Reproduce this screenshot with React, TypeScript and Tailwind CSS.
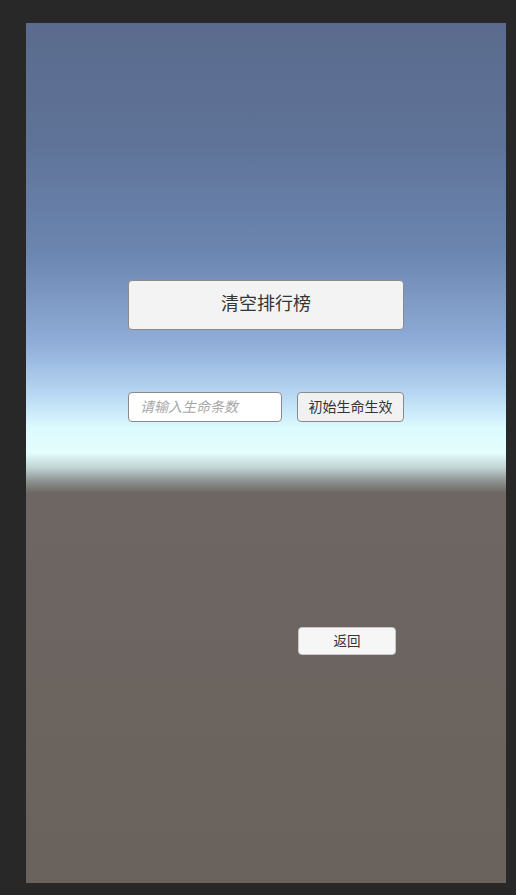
export default function App() {
  return (
    <div className="min-h-[895px] w-[516px] bg-[#282828] pt-[23px] pl-[26px] font-['Noto_Sans_CJK_SC','Noto_Sans',sans-serif]">
      <div className="flex h-[860px] w-[480px] flex-col bg-[linear-gradient(to_bottom,#5a6b8d_0px,#5f7398_120px,#6b86b0_230px,#8fadd8_320px,#b6d6f2_370px,#dcfbff_405px,#e4fdfd_430px,#bfd3d2_445px,#8e9391_458px,#6d6662_470px,#6a625d_860px)] pl-[102px] pt-[257px]">
        <button className="flex h-[50px] w-[276px] items-center justify-center rounded-[4px] border border-[#8a8a8a] bg-[#f3f3f3] pb-[5px] text-[18px] text-[#333]">
          清空排行榜
        </button>

        <div className="mt-[62px] flex items-center gap-[15px]">
          <div className="flex h-[30px] w-[154px] items-center rounded-[4px] border border-[#8a8a8a] bg-white pb-[2px] pl-[11px] text-[14px] italic text-[#a8a8a8]">
            请输入生命条数
          </div>
          <button className="flex h-[30px] w-[107px] items-center justify-center rounded-[4px] border border-[#8a8a8a] bg-[#f1f1f1] pb-[2px] text-[14px] text-[#333]">
            初始生命生效
          </button>
        </div>

        <button className="ml-[170px] mt-[205px] flex h-[28px] w-[98px] items-center justify-center rounded-[4px] border border-[#c8c8c8] bg-[#f6f6f6] pb-[2px] text-[13.5px] text-[#333]">
          返回
        </button>
      </div>
    </div>
  )
}
